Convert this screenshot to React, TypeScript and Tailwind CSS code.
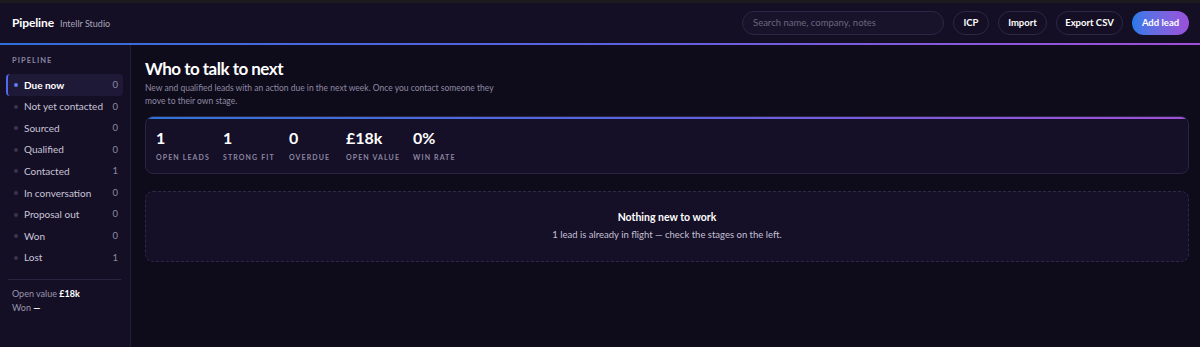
import React from "react";

const stages = [
  { name: "Due now", count: 0, active: true },
  { name: "Not yet contacted", count: 0 },
  { name: "Sourced", count: 0 },
  { name: "Qualified", count: 0 },
  { name: "Contacted", count: 1 },
  { name: "In conversation", count: 0 },
  { name: "Proposal out", count: 0 },
  { name: "Won", count: 0 },
  { name: "Lost", count: 1 },
];

const stats = [
  { value: "1", label: "Open leads", w: "w-[67px]" },
  { value: "1", label: "Strong fit", w: "w-[66px]" },
  { value: "0", label: "Overdue", w: "w-[57px]" },
  { value: "£18k", label: "Open value", w: "w-[67px]" },
  { value: "0%", label: "Win rate", w: "w-[60px]" },
];

export default function App() {
  return (
    <div className="h-[347px] w-[1200px] overflow-hidden bg-[#0e0b1a] text-white font-['Lato','Noto_Sans',sans-serif]">
      <div className="h-[3px] bg-[#1b1a1f]" />
      {/* Header */}
      <header className="flex h-[40px] items-center justify-between bg-[#140f25] pl-3 pr-[11px]">
        <div className="flex items-baseline gap-[6px]">
          <span className="text-[12px] font-bold tracking-[-0.01em] text-white">Pipeline</span>
          <span className="text-[9px] text-[#a8a4b8]">Intellr Studio</span>
        </div>
        <div className="flex items-center gap-[9px]">
          <div className="flex h-[24px] w-[202px] items-center rounded-full border border-[#2c2744] bg-[#18132b] px-[10px] text-[9.5px] text-[#6b6680]">
            Search name, company, notes
          </div>
          <button className="h-[24px] w-[36px] rounded-full border border-[#2c2744] text-[9.5px] font-bold">ICP</button>
          <button className="h-[24px] w-[49px] rounded-full border border-[#2c2744] text-[9.5px] font-bold">Import</button>
          <button className="h-[24px] w-[67px] rounded-full border border-[#2c2744] text-[9.5px] font-bold">Export CSV</button>
          <button className="h-[24px] w-[57px] rounded-full bg-gradient-to-r from-[#2379e8] to-[#9a4fd9] text-[9.5px] font-bold">Add lead</button>
        </div>
      </header>
      <div className="h-[2px] bg-gradient-to-r from-[#2e6ed8] via-[#5a62e0] to-[#a04fd8]" />

      <div className="flex h-[302px]">
        {/* Sidebar */}
        <aside className="w-[131px] shrink-0 border-r border-[#241f38] bg-[#140f25] pl-[6px] pr-[7px] pt-[10px]">
          <div className="pl-[6px] text-[7.5px] font-bold tracking-[0.14em] text-[#8a85a0]">PIPELINE</div>
          <nav className="mt-[8px] flex flex-col">
            {stages.map((s) => (
              <div
                key={s.name}
                className={
                  s.active
                    ? "flex h-[21.6px] items-center justify-between rounded-[4px] border-l-2 border-[#4f6bf0] bg-[#1f1938] pl-[6px] pr-[5px]"
                    : "flex h-[21.6px] items-center justify-between pl-[8px] pr-[5px]"
                }
              >
                <div className="flex items-center gap-[6px]">
                  <span className={s.active ? "h-[4px] w-[4px] rounded-full bg-[#5b7cf5]" : "h-[4px] w-[4px] rounded-full bg-[#3a3550]"} />
                  <span className={s.active ? "text-[10px] font-bold text-white" : "text-[10px] text-[#c9c5d8]"}>{s.name}</span>
                </div>
                <span className="text-[9.5px] text-[#8d89a0]">{s.count}</span>
              </div>
            ))}
          </nav>
          <div className="mx-[2px] mt-[10px] border-t border-[#2a2540]" />
          <div className="mt-[7px] pl-[6px] text-[9px] leading-[14px] text-[#9a96ad]">
            <div>
              Open value <span className="font-bold text-white">£18k</span>
            </div>
            <div>
              Won <span className="font-bold text-white">—</span>
            </div>
          </div>
        </aside>

        {/* Main */}
        <main className="flex-1 pl-[14px] pr-[11px] pt-[13px]">
          <h1 className="text-[17px] font-bold leading-[22px] tracking-[-0.03em] text-white">Who to talk to next</h1>
          <p className="mt-[2px] w-[360px] text-[8.5px] leading-[13px] text-[#8f8aa3]">
            New and qualified leads with an action due in the next week. Once you contact someone they move to their own stage.
          </p>

          <div className="mt-[8px] overflow-hidden rounded-[8px] border border-[#2a2540] bg-[#150f27]">
            <div className="h-[2px] bg-gradient-to-r from-[#2e73d8] via-[#5a62e0] to-[#a04fd8]" />
            <div className="flex px-[10px] pb-[10px] pt-[9px]">
              {stats.map((st) => (
                <div key={st.label} className={st.w}>
                  <div className="text-[16px] font-bold leading-[20px] text-white">{st.value}</div>
                  <div className="mt-[4px] text-[7px] font-bold uppercase tracking-[0.16em] text-[#8a85a0]">{st.label}</div>
                </div>
              ))}
            </div>
          </div>

          <div className="mt-[17px] flex h-[71px] flex-col items-center justify-center rounded-[8px] border border-dashed border-[#2e2845] bg-[#150f27]">
            <div className="text-[10.5px] font-bold text-white">Nothing new to work</div>
            <div className="mt-[3px] text-[9.5px] text-[#c4c0d3]">1 lead is already in flight — check the stages on the left.</div>
          </div>
        </main>
      </div>
    </div>
  );
}
